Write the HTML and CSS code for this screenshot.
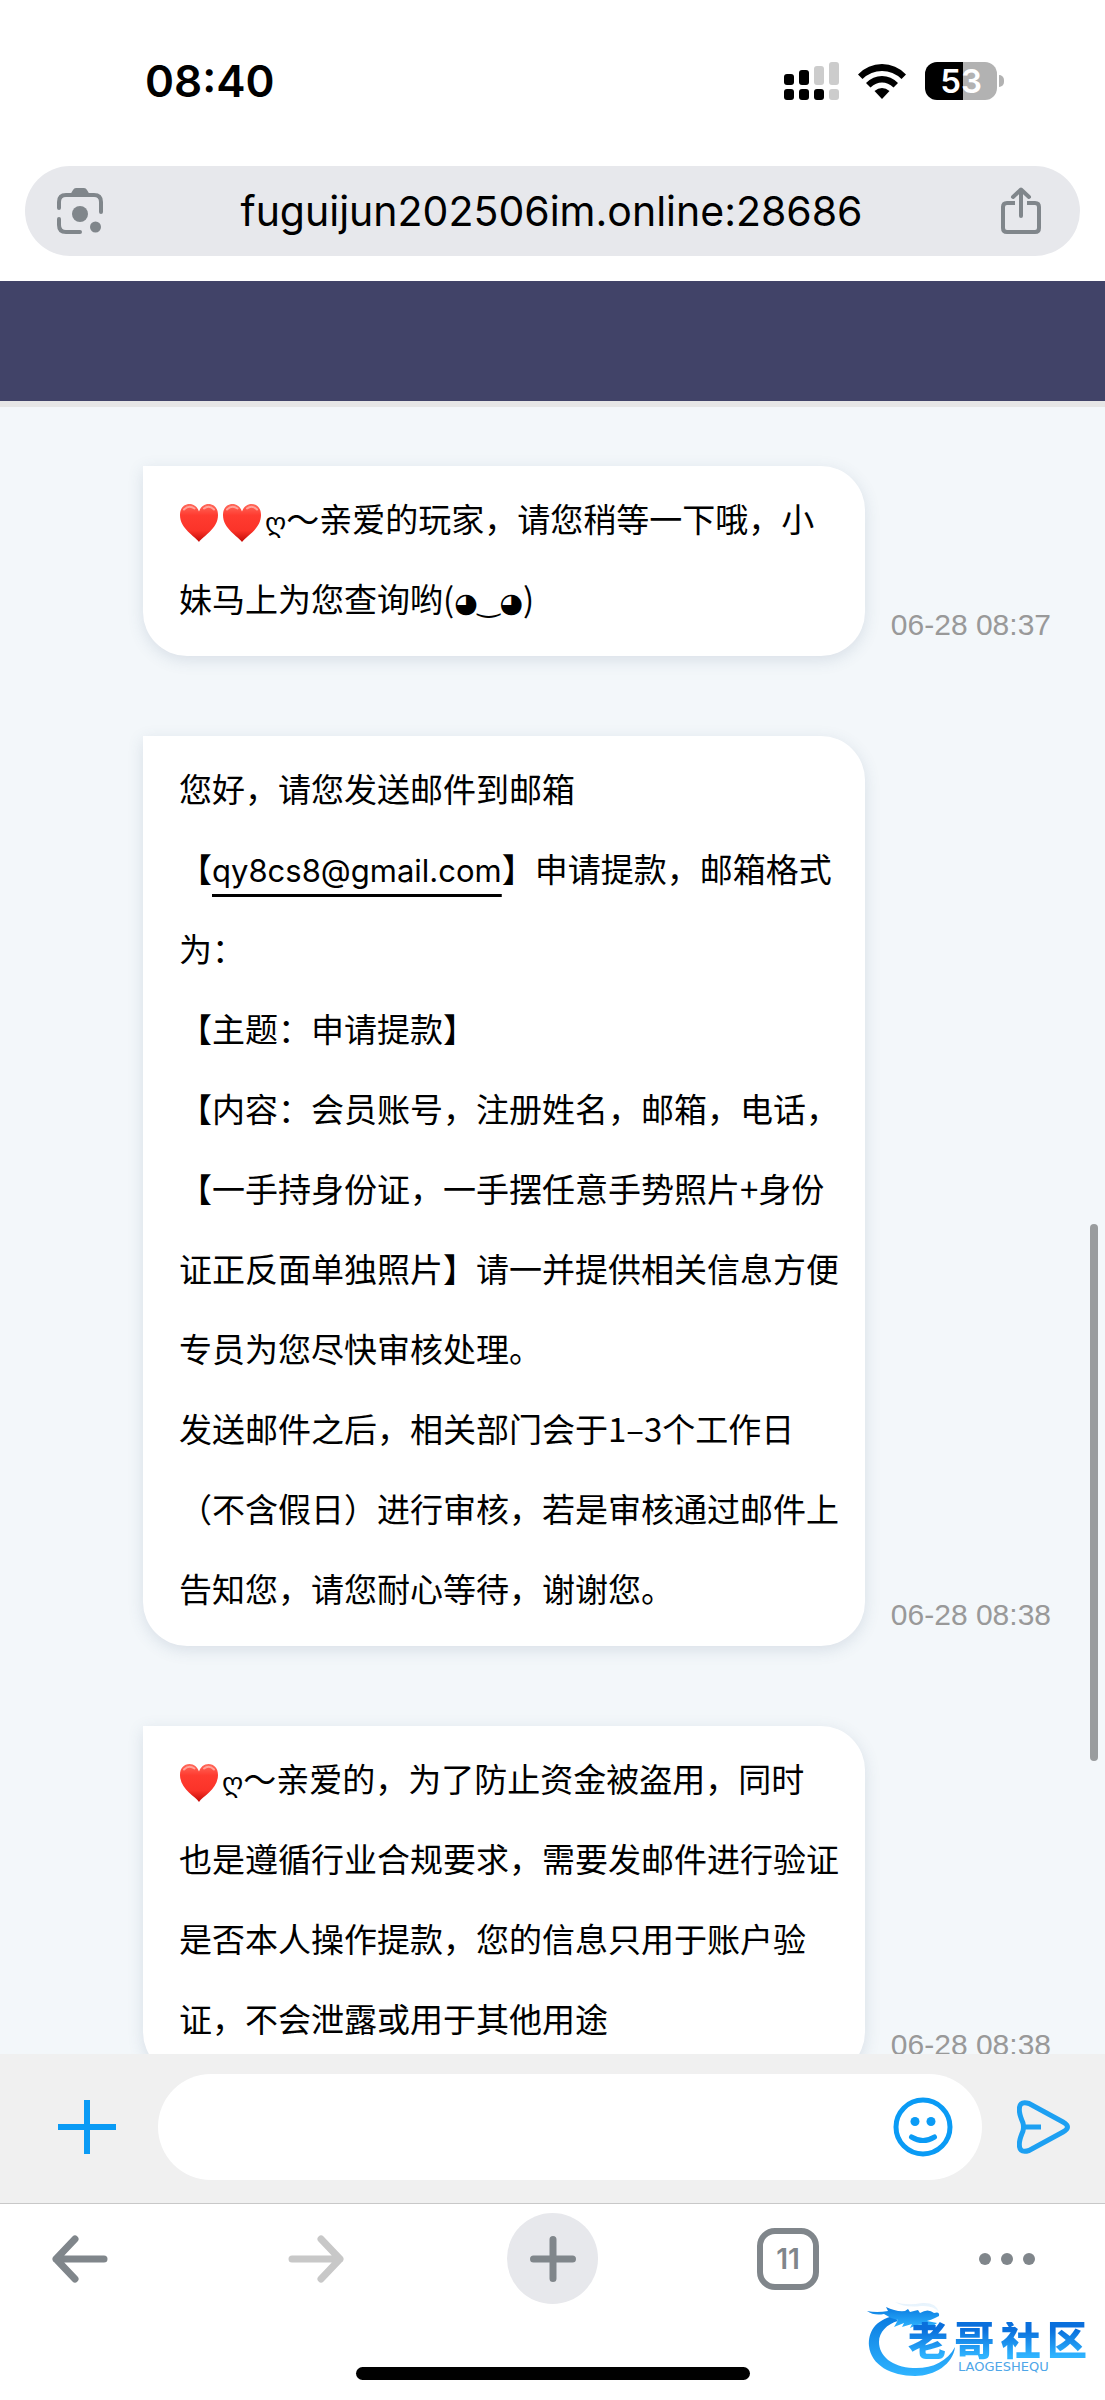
FILE: index.html
```html
<!DOCTYPE html>
<html lang="zh-CN">
<head>
    <meta charset="UTF-8">
    <meta name="viewport" content="width=device-width, initial-scale=1.0">
    <title>在线客服</title>
    <link rel="stylesheet" href="styles.css">
</head>
<body>
    <svg width="0" height="0" class="defs" aria-hidden="true">
        <defs>
            <linearGradient id="heartFill" x1="0" y1="0" x2="0" y2="1">
                <stop offset="0" stop-color="#ff6a5c"/>
                <stop offset="0.3" stop-color="#ff3b30"/>
                <stop offset="0.7" stop-color="#fb3329"/>
                <stop offset="1" stop-color="#c40a06"/>
            </linearGradient>
            <linearGradient id="logoFill" x1="0" y1="0" x2="0" y2="1">
                <stop offset="0" stop-color="#0a7be0"/>
                <stop offset="1" stop-color="#2fb4ff"/>
            </linearGradient>
            <symbol id="heart" viewBox="0 0 40 40">
                <path fill="url(#heartFill)" d="M20 39C16 33 1 26 1 12C1 5 5 1 10.500 1C15 1 18.500 4 20 8.500C21.500 4 25 1 29.500 1C35 1 39 5 39 12C39 26 24 33 20 39Z"/>
                <path fill="none" stroke="#ffb3aa" stroke-width="2" stroke-linecap="round" opacity="0.8" d="M5 6.500Q10 1.500 15.500 5.500M25 5.500Q30 1.500 35 6.500"/>
            </symbol>
        </defs>
    </svg>

    <!-- status bar -->
    <div class="status">
        <div class="clock">08:40</div>
        <div class="status-icons">
            <svg class="signal" viewBox="0 0 55 38">
                <rect x="0" y="12" width="10" height="11" rx="3"/>
                <rect x="15" y="8" width="10" height="15" rx="3"/>
                <rect x="30" y="4" width="10" height="19" rx="3" fill="#ccc"/>
                <rect x="45" y="0" width="10" height="23" rx="3" fill="#ccc"/>
                <rect x="0" y="27" width="10" height="11" rx="3"/>
                <rect x="15" y="27" width="10" height="11" rx="3"/>
                <rect x="30" y="27" width="10" height="11" rx="3"/>
                <rect x="45" y="27" width="10" height="11" rx="3" fill="#ccc"/>
            </svg>
            <svg class="wifi" viewBox="0 0 48 36">
                <path d="M0 11.500Q10 1 24 1T48 11.500L43.500 16Q35 8 24 8T4.500 16Z"/>
                <path d="M8 20Q15 13 24 13T40 20L35.500 24.500Q30 19.500 24 19.500T12.500 24.500Z"/>
                <path d="M16.500 28Q20 25 24 25T31.500 28L24 36Z"/>
            </svg>
            <div class="battery"><span>53</span></div>
        </div>
    </div>

    <!-- address bar -->
    <div class="address">
        <div class="address-inner">
            <button class="icon-btn" aria-label="Lens">
                <svg width="46" height="48" viewBox="0 0 46 48" fill="none" stroke="#80868b" stroke-width="4" stroke-linecap="round">
                    <path d="M2 21V15Q2 8 9 8H37Q44 8 44 15V25M2 32V38Q2 45 9 45H23"/>
                    <path fill="#80868b" stroke="none" d="M13 8L16 3Q17 1 19 1H27Q29 1 30 3L33 8V10H13Z"/>
                    <circle cx="23" cy="27" r="8" fill="#80868b" stroke="none"/>
                    <circle cx="38.500" cy="40" r="5.500" fill="#80868b" stroke="none"/>
                </svg>
            </button>
            <input class="url" type="text" aria-label="Address" value="fuguijun202506im.online:28686">
            <button class="icon-btn" aria-label="Share">
                <svg width="42" height="48" viewBox="0 0 42 48" fill="none" stroke="#80868b" stroke-width="4" stroke-linecap="round" stroke-linejoin="round">
                    <path stroke-linecap="butt" d="M15 16H7Q3 16 3 20V41Q3 45 7 45H35Q39 45 39 41V20Q39 16 35 16H27"/>
                    <path d="M21 29V3M13 10L21 2.500L29 10"/>
                </svg>
            </button>
        </div>
    </div>

    <header class="chat-header"></header>

    <main class="chat">
        <div class="message">
            <div class="bubble"><svg class="heart"><use href="#heart"/></svg><svg class="heart"><use href="#heart"/></svg><span class="sym">ღ</span>～亲爱的玩家，请您稍等一下哦，小<br>妹马上为您查询哟(<span class="sym">◕‿◕</span>)</div>
            <time>06-28 08:37</time>
        </div>
        <div class="message">
            <div class="bubble">您好，请您发送邮件到邮箱<br>
                【<a href="mailto:qy8cs8@gmail.com">qy8cs8@gmail.com</a>】申请提款，邮箱格式<br>
                为：<br>
                【主题：申请提款】<br>
                【内容：会员账号，注册姓名，邮箱，电话，<br>
                【一手持身份证，一手摆任意手势照片+身份<br>
                证正反面单独照片】请一并提供相关信息方便<br>
                专员为您尽快审核处理。<br>
                发送邮件之后，相关部门会于1–3个工作日<br>
                （不含假日）进行审核，若是审核通过邮件上<br>
                告知您，请您耐心等待，谢谢您。</div>
            <time>06-28 08:38</time>
        </div>
        <div class="message">
            <div class="bubble"><svg class="heart"><use href="#heart"/></svg><span class="sym">ღ</span>～亲爱的，为了防止资金被盗用，同时<br>
                也是遵循行业合规要求，需要发邮件进行验证<br>
                是否本人操作提款，您的信息只用于账户验<br>
                证，不会泄露或用于其他用途</div>
            <time>06-28 08:38</time>
        </div>
        <div class="scroll-thumb"></div>
    </main>

    <!-- compose bar -->
    <form class="compose">
        <button type="button" class="icon-btn" aria-label="更多">
            <svg width="58" height="58" viewBox="0 0 58 58" stroke="#0a9bf5" stroke-width="6"><path d="M0 29H58M29 2V56"/></svg>
        </button>
        <div class="field">
            <input type="text" aria-label="消息">
            <button type="button" class="icon-btn" aria-label="表情">
                <svg width="60" height="60" viewBox="0 0 60 60" fill="none" stroke="#0a9bf5" stroke-width="5">
                    <circle cx="30" cy="30" r="27"/>
                    <path stroke-linecap="round" d="M18.500 40Q30 47 41.500 40"/>
                    <g fill="#0a9bf5" stroke="none"><circle cx="22" cy="24.500" r="4.500"/><circle cx="38" cy="24.500" r="4.500"/></g>
                </svg>
            </button>
        </div>
        <button type="button" class="icon-btn" aria-label="发送">
            <svg width="54" height="54" viewBox="0 0 54 54" fill="none" stroke="#1da0f2" stroke-width="5" stroke-linejoin="round">
                <path d="M12 3.500L46 22Q55 27 46 32L12 50.500Q1 54 2.500 42Q3 38 6 31Q7 27 6 23Q3 16 2.500 12Q1 0 12 3.500ZM6 27H24"/>
            </svg>
        </button>
    </form>

    <footer class="toolbar">
        <nav>
            <button class="icon-btn" aria-label="Back">
                <svg width="56" height="50" viewBox="0 0 56 50" fill="none" stroke="#80868b" stroke-width="7" stroke-linecap="round" stroke-linejoin="round"><path d="M23 5L4 25L23 45M4 25H52"/></svg>
            </button>
            <button class="icon-btn" aria-label="Forward" disabled>
                <svg width="56" height="50" viewBox="0 0 56 50" fill="none" stroke="#c8c8c8" stroke-width="7" stroke-linecap="round" stroke-linejoin="round"><path d="M33 5L52 25L33 45M52 25H4"/></svg>
            </button>
            <button class="icon-btn new-tab" aria-label="New tab">
                <svg width="46" height="46" viewBox="0 0 46 46" stroke="#80868b" stroke-width="7" stroke-linecap="round"><path d="M3.500 23H42.500M23 3.500V42.500"/></svg>
            </button>
            <button class="icon-btn tabs" aria-label="Tabs">11</button>
            <button class="icon-btn" aria-label="Menu">
                <svg width="58" height="14" viewBox="0 0 58 14" fill="#80868b"><circle cx="7" cy="7" r="6"/><circle cx="29" cy="7" r="6"/><circle cx="51" cy="7" r="6"/></svg>
            </button>
        </nav>
        <div class="home-bar"></div>
    </footer>

    <div class="watermark">
        <svg class="dragon" viewBox="0 0 90 78" fill="url(#logoFill)">
            <path d="M27 16C8 20 1 32 2 46C4 65 24 76 48 76C68 76 86 64 88 47C80 62 64 69 46 68C25 67 12 56 12 42C12 32 20 24 31 21Z"/>
            <path d="M0 11Q10 13 21 11L19 7Q29 12 38 11L41 9L43 12L51 10L53 13Q61 8 67 13Q73 11 72 16L68 18Q64 20 60 21L70 23L66 26Q56 24 50 25L43 28L45 24L35 27L37 23L27 27L31 20L24 18L17 14Q7 16 0 11Z"/>
            <path opacity="0.1" d="M28 2Q40 6 55 3Q69 2 72 12Q66 5 54 6Q38 8 28 2Z"/>
        </svg>
        <div class="brand"><span>老</span><span>哥</span><span>社</span><span>区</span></div>
        <div class="brand-sub">LAOGESHEQU</div>
    </div>
</body>
</html>
```
FILE: styles.css
```css
* {
    margin: 0;
    padding: 0;
    box-sizing: border-box;
}

body {
    font-family: Inter, "Noto Sans CJK SC", sans-serif;
    background: #fff;
    color: #000;
    height: 100vh;
    display: flex;
    flex-direction: column;
    position: relative;
    overflow: hidden;
}

.defs {
    position: absolute;
}

svg {
    display: block;
    flex-shrink: 0;
}

.icon-btn {
    background: none;
    border: none;
    display: flex;
    align-items: center;
    justify-content: center;
    flex-shrink: 0;
    cursor: pointer;
}

/* status bar */
.status {
    height: 162px;
    padding: 0 102px 0 145px;
    display: flex;
    align-items: center;
    justify-content: space-between;
    flex-shrink: 0;
}

.clock {
    font-size: 44px;
    font-weight: 600;
}

.status-icons {
    display: flex;
    align-items: center;
    gap: 19px;
}

.signal {
    width: 55px;
    height: 38px;
}

.wifi {
    width: 48px;
    height: 36px;
}

.battery {
    position: relative;
    width: 72px;
    height: 38px;
    margin-right: 6px;
    border-radius: 12px;
    background: linear-gradient(90deg, #000 53%, #b2b2b2 53%);
    color: #fff;
    font-size: 33px;
    font-weight: 600;
    line-height: 38px;
    text-align: center;
}

.battery::after {
    content: "";
    position: absolute;
    left: 74px;
    top: 13px;
    width: 5px;
    height: 12px;
    border-radius: 0 5px 5px 0;
    background: #b2b2b2;
}

/* address bar */
.address {
    padding: 4px 25px 25px;
    flex-shrink: 0;
}

.address-inner {
    height: 90px;
    padding: 0 38px 0 32px;
    display: flex;
    align-items: center;
    border-radius: 45px;
    background: #e7e8ec;
}

.url {
    flex: 1;
    min-width: 0;
    border: none;
    outline: none;
    background: none;
    font-family: Inter, sans-serif;
    font-size: 41px;
    text-align: center;
}

.chat-header {
    height: 126px;
    background: #414368;
    border-bottom: 6px solid #e6e6e6;
    flex-shrink: 0;
}

/* messages */
.chat {
    position: relative;
    flex: 1;
    min-height: 0;
    overflow: hidden;
    padding: 59px 54px 0 143px;
    background: #f3f7fa;
}

.message {
    display: flex;
    align-items: flex-end;
    gap: 26px;
    margin-bottom: 80px;
}

.bubble {
    flex: 1;
    padding: 12px 20px 18px 36px;
    border-radius: 0 44px 44px 44px;
    background: #fff;
    box-shadow: 0 4px 16px rgba(60, 90, 120, 0.15);
    font-family: "Noto Sans CJK SC", sans-serif;
    font-size: 33px;
    line-height: 80px;
    text-spacing-trim: space-all;
}

.bubble a {
    font-family: Inter, sans-serif;
    font-size: 31px;
    line-height: 1;
    color: #000;
    text-decoration: underline;
    text-decoration-thickness: 3px;
    text-underline-offset: 12px;
    text-decoration-skip-ink: none;
}

.sym {
    font-family: "DejaVu Sans", sans-serif;
    font-size: 27px;
    line-height: 1;
}

.heart {
    display: inline-block;
    width: 40px;
    height: 40px;
    margin-right: 3px;
    vertical-align: middle;
}

.message time {
    padding-bottom: 14px;
    font-family: "Liberation Sans", Arial, sans-serif;
    font-size: 30px;
    color: #999;
    white-space: nowrap;
}

.scroll-thumb {
    position: absolute;
    right: 7px;
    top: 817px;
    width: 8px;
    height: 537px;
    border-radius: 4px;
    background: #999c9e;
}

/* compose bar */
.compose {
    height: 149px;
    padding: 20px 34px 23px 58px;
    display: flex;
    align-items: center;
    background: #f0f0f0;
    flex-shrink: 0;
}

.field {
    flex: 1;
    height: 106px;
    margin: 0 35px 0 42px;
    padding: 0 29px 0 40px;
    display: flex;
    align-items: center;
    border-radius: 53px;
    background: #fff;
}

.field input {
    flex: 1;
    min-width: 0;
    height: 80px;
    border: none;
    outline: none;
    background: none;
    font-size: 33px;
}

/* bottom toolbar */
.toolbar {
    height: 197px;
    padding: 9px 0 20px;
    border-top: 1px solid #c8c8c8;
    display: flex;
    flex-direction: column;
    align-items: center;
    justify-content: space-between;
    flex-shrink: 0;
}

.toolbar nav {
    width: 100%;
    padding-right: 34px;
    display: grid;
    grid-template-columns: 160fr 312fr 161fr 310fr 128fr;
    align-items: center;
    justify-items: center;
}

.new-tab {
    width: 91px;
    height: 91px;
    border-radius: 50%;
    background: #e7e8ec;
}

.tabs {
    width: 62px;
    height: 62px;
    border: 6px solid #80868b;
    border-radius: 18px;
    font-family: Inter, sans-serif;
    font-size: 28px;
    font-weight: 600;
    color: #80868b;
}

.home-bar {
    width: 394px;
    max-width: 60%;
    height: 13px;
    border-radius: 7px;
    background: #000;
}

/* watermark */
.watermark {
    position: absolute;
    right: 18px;
    bottom: 22px;
    width: 220px;
    height: 78px;
    padding-left: 41px;
}

.dragon {
    position: absolute;
    left: 0;
    top: 0;
    width: 90px;
    height: 78px;
}

.brand {
    position: relative;
    display: flex;
    justify-content: space-between;
    padding-top: 22px;
    font-size: 40px;
    font-weight: 900;
    line-height: 38px;
}

.brand span {
    background: linear-gradient(#0a6fdc 20%, #2fb4ff 90%);
    background-clip: text;
    -webkit-background-clip: text;
    color: transparent;
}

.brand-sub {
    position: relative;
    padding-left: 50px;
    font-family: "DejaVu Sans", sans-serif;
    font-size: 13px;
    line-height: 14px;
    color: #4ea6e8;
}
```
